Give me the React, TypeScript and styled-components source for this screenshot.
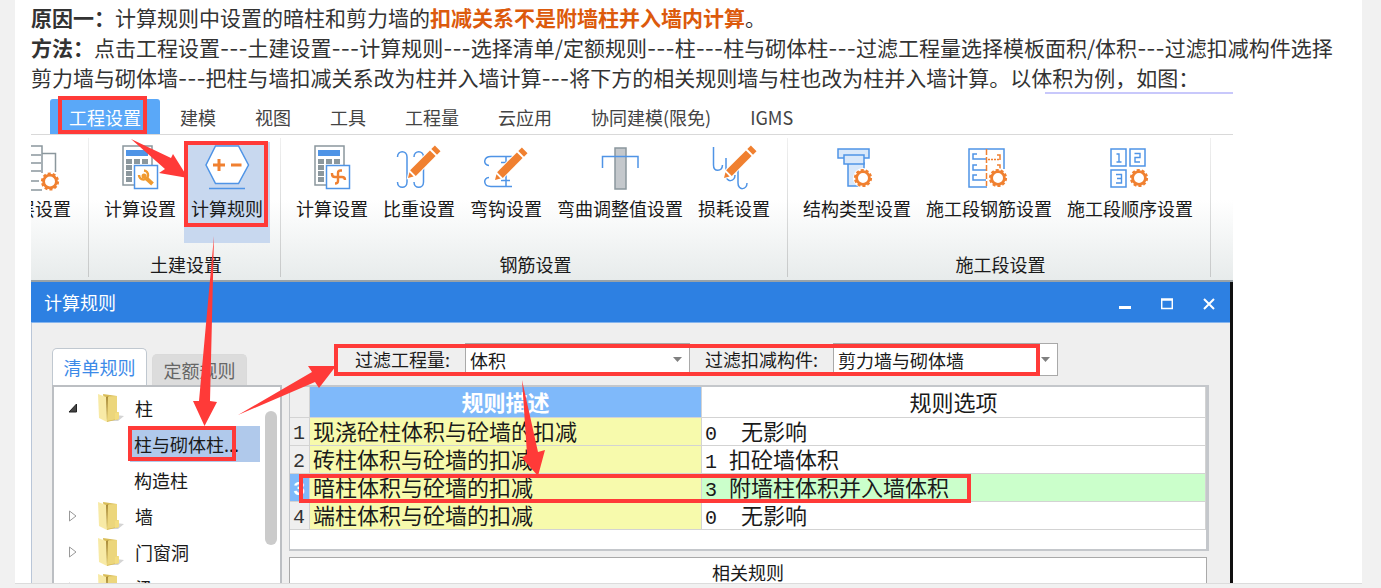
import React from "react";
import styled, { createGlobalStyle, css } from "styled-components";

const BLUE = "#4f94e6";
const ORANGE = "#f08030";
const GREY = "#8b979d";
const RED = "#ff3a38";

const GlobalStyle = createGlobalStyle`
  *, *::before, *::after { box-sizing: border-box; }
  body {
    margin: 0;
    background: #f1f1f1;
    color: #333;
    font-family: "Noto Sans CJK SC", sans-serif;
    font-size: 18px;
  }
  button, select {
    margin: 0;
    padding: 0;
    border: 0;
    background: none;
    color: inherit;
    font: inherit;
    cursor: pointer;
  }
`;

/* ---------- article ---------- */

const Page = styled.div`
  display: flex;
  flex-direction: column;
  height: 100vh;
  padding: 0 19px 4px 15px;
  overflow: hidden;
`;

const Card = styled.main`
  flex: 1;
  min-height: 0;
  padding: 2px 16px 0;
  overflow: hidden;
  background: #fff;
  border-bottom: 1px solid #dcdcdc;
`;

const Paragraph = styled.p`
  margin: 0;
  font-size: 21px;
  line-height: 30px;
`;

const Highlight = styled.strong`
  color: #dc5a0c;
`;

const Dashes = styled.span`
  font-family: Inter, sans-serif;
  font-size: 20px;
  line-height: 1;
`;

const Figure = styled.figure`
  position: relative;
  max-width: 1202px;
  margin: 0;
  overflow: hidden;
  color: #1a1a1a;
`;

/* ---------- ribbon ---------- */

const MainTabs = styled.nav`
  display: flex;
  gap: 1px;
  height: 43px;
  padding: 7px 0 0 19px;
  border-bottom: 1px solid #d9d9d9;
  background: linear-gradient(#c8c8fb, #c8c8fb) right top / 188px 2px no-repeat;
`;

const MainTab = styled.button<{ $active?: boolean }>`
  height: 35px;
  padding: 0 19px;
  border-radius: 3px 3px 0 0;
  color: #444;
  white-space: nowrap;
  ${(p) => p.$active && css`
    background: #5aa8f8;
    color: #fff;
  `}
`;

const Ribbon = styled.section`
  display: flex;
  height: 147px;
  padding: 3px 0;
  background: linear-gradient(#fff 45%, #e7ebeb);
  border-bottom: 2px solid #98a2a8;
`;

const RibbonGroup = styled.div<{ $cut?: boolean }>`
  display: flex;
  flex-direction: column;
  flex-shrink: 0;
  padding: 4px 10px 0 8px;
  border-right: 1px solid;
  border-image: linear-gradient(#f0f0f0, #c6c8c8) 1;
  ${(p) => p.$cut && css`
    width: 58px;
    align-items: flex-end;
    overflow: hidden;
  `}
`;

const ToolRow = styled.div`
  display: flex;
  gap: 1px;
`;

const ToolButton = styled.button<{ $active?: boolean }>`
  display: flex;
  flex-direction: column;
  align-items: center;
  gap: 5px;
  height: 101px;
  padding: 3px 7px 0;
  line-height: 24px;
  white-space: nowrap;
  background: ${(p) => (p.$active ? "#c8d8ef" : "transparent")};
`;

const GroupName = styled.div`
  margin-top: 9px;
  padding-left: 5px;
  line-height: 24px;
  text-align: center;
`;

/* ---------- dialog ---------- */

const Desktop = styled.div`
  padding-right: 3px;
  background: #101010;
`;

const Dialog = styled.section`
  height: 301px;
  border-left: 1px solid #b9c6d8;
  background: #efefef;
`;

const TitleBar = styled.header`
  display: flex;
  align-items: center;
  justify-content: space-between;
  height: 41px;
  margin-left: -1px;
  padding-left: 13px;
  border-bottom: 1px solid #86b5ee;
  background: #2d80e2;
  color: #fff;
`;

const DialogTitle = styled.h2`
  margin: 0;
  font-size: 18px;
  font-weight: 400;
`;

const WindowButton = styled.button`
  width: 42px;
  height: 38px;
`;

const DialogBody = styled.div`
  display: flex;
  gap: 7px;
  padding: 20px 21px 0 20px;
`;

const Sidebar = styled.aside`
  flex: 0 0 230px;
`;

const SideTabs = styled.div`
  display: flex;
  align-items: flex-end;
  gap: 5px;
  height: 42px;
`;

const SideTab = styled.button<{ $active?: boolean }>`
  width: 95px;
  height: ${(p) => (p.$active ? 37 : 31)}px;
  border: 1px solid ${(p) => (p.$active ? "#c0c8d0" : "#dadada")};
  border-bottom: 0;
  border-radius: 5px 5px 0 0;
  background: ${(p) => (p.$active ? "#fff" : "#dcdcdc")};
  color: ${(p) => (p.$active ? "#3c8ae8" : "#666")};
`;

const TreePanel = styled.div`
  display: flex;
  justify-content: space-between;
  height: 240px;
  padding: 3px 3px 0 0;
  overflow: hidden;
  border: 2px solid #bcbfc3;
  background: #fff;
`;

const Tree = styled.ul`
  flex: 1;
  margin: 0;
  padding: 0;
  list-style: none;
`;

const TreeRow = styled.li`
  display: flex;
  align-items: center;
  height: 36px;
  padding-left: 14px;
`;

const Folder = styled.button`
  display: flex;
  align-items: center;
  line-height: 36px;

  svg:first-child { margin-right: 20px; }
  svg:last-of-type { margin-right: 11px; }
`;

const Leaf = styled.button<{ $active?: boolean }>`
  width: 130px;
  height: 36px;
  margin-left: 62px;
  padding-left: 4px;
  text-align: left;
  white-space: nowrap;
  background: ${(p) => (p.$active ? "#b0c9eb" : "transparent")};
`;

const ScrollThumb = styled.div`
  width: 12px;
  height: 134px;
  margin-top: 21px;
  border-radius: 6px;
  background: #cbcbcb;
`;

const Content = styled.div`
  flex: 1;
  min-width: 0;
`;

const Filters = styled.div`
  display: flex;
  align-items: flex-start;
  height: 42px;
  padding-left: 66px;
  line-height: 32px;
`;

const FilterLabel = styled.label`
  margin-right: 15px;
  white-space: nowrap;
`;

const SelectBox = styled.div`
  position: relative;
  width: 225px;
  height: 33px;
  margin-right: 15px;

  svg {
    position: absolute;
    top: 14px;
    right: 8px;
    pointer-events: none;
  }
`;

const Select = styled.select`
  width: 100%;
  height: 33px;
  padding: 0 0 4px 4px;
  border: 1px solid #a9a9a9;
  appearance: none;
  background: #fff;
`;

const TableFrame = styled.div`
  height: 166px;
  border: 2px solid #c4c7cb;
  border-width: 2px 3px 2px 1px;
  background: #fff;
`;

const RuleTable = styled.table`
  width: 100%;
  border-collapse: separate;
  border-spacing: 0;
  table-layout: fixed;
  font-size: 22px;
  line-height: 22px;

  th, td {
    height: 28px;
    padding: 0 0 4px 3px;
    border: 1px solid #d3d3d3;
    border-width: 0 1px 1px 0;
    text-align: left;
    vertical-align: middle;
    white-space: pre;
  }
  thead th {
    height: 31px;
    padding: 0 0 3px;
    text-align: center;
  }
  tbody th {
    padding: 4px 0 0 3px;
  }
`;

const NumberHead = styled.th<{ $active?: boolean }>`
  width: 20px;
  overflow: hidden;
  font-family: "Liberation Mono", monospace;
  font-size: 20px;
  font-weight: ${(p) => (p.$active ? 700 : 400)};
  color: ${(p) => (p.$active ? "#fff" : "#333")};
  background: ${(p) => (p.$active ? "#7fb9fa" : "#efefef")};
`;

const DescriptionHead = styled.th`
  width: 392px;
  background: #7fb9fa;
  color: #fff;
  font-weight: 700;
`;

const OptionHead = styled.th`
  font-weight: 400;
`;

const Description = styled.td`
  background: #f7faac;
`;

const Option = styled.td<{ $active?: boolean }>`
  background: ${(p) => (p.$active ? "#cbffcb" : "#fff")};
`;

const Code = styled.span`
  font-family: "Liberation Mono", monospace;
  font-size: 20px;
  line-height: 0;
`;

const RelatedPanel = styled.div`
  height: 60px;
  margin: 6px 2px 0 0;
  border: 1px solid #a9a9a9;
  background: #fff;
  line-height: 28px;
  text-align: center;
`;

const Annotations = styled.svg`
  position: absolute;
  top: 0;
  left: 0;
  pointer-events: none;
`;

/* ---------- icons ---------- */

const ToolIcon = ({ children }: { children: React.ReactNode }) => (
  <svg width="46" height="46" viewBox="0 0 46 46" fill="none" stroke={BLUE} strokeWidth="1.5" overflow="visible" aria-hidden="true">
    {children}
  </svg>
);

const Gear = ({ x, y }: { x: number; y: number }) => (
  <g fill="none">
    <circle cx={x} cy={y} r="10" fill="#fff" stroke="none" />
    <circle cx={x} cy={y} r="6.4" stroke={ORANGE} strokeWidth="2.8" />
    <circle cx={x} cy={y} r="8" stroke={ORANGE} strokeWidth="2.2" strokeDasharray="3 2.026" />
  </g>
);

const Pencil = ({ x, y }: { x: number; y: number }) => (
  <g transform={`translate(${x} ${y}) rotate(-45)`} fill={ORANGE} stroke="none">
    <path d="M-2 0 L6 -5 H43 V5 H6 Z" fill="#fff" />
    <path d="M0 0 L5 -3 V3 Z" />
    <path d="M7 -4 H35 V4 H7 Z" />
    <path d="M37 -4 H42 V4 H37 Z" />
  </g>
);

const Calculator = () => (
  <>
    <rect x="6" y="1" width="29" height="39" fill="#fff" stroke={GREY} />
    <rect x="9" y="5" width="22" height="6" fill={BLUE} stroke="none" />
    <path d="M9 16.500h6m2 0h6m2 0h6M9 22.500h6M9 28.500h6M9 34.500h6" stroke={GREY} strokeWidth="5" />
    <rect x="17.500" y="20.500" width="23" height="23" fill="#fff" />
  </>
);

const FloorIcon = () => (
  <ToolIcon>
    <path d="M2 1H21V28M2 10H20M2 18H20M2 26H20M2 36H18M2 45H21M21 8.500H34.500V27" stroke={GREY} />
    <Gear x={29} y={36.5} />
  </ToolIcon>
);

const WrenchCalcIcon = () => (
  <ToolIcon>
    <Calculator />
    <path d="M29 33 L35.500 39" stroke="#f09a30" strokeWidth="4" />
    <path d="M27 25.500A4.500 4.500 0 1 1 22 30" stroke="#f09a30" strokeWidth="2.500" />
    <circle cx="27" cy="31" r="2.500" fill="#f09a30" stroke="none" />
  </ToolIcon>
);

const RulesIcon = () => (
  <ToolIcon>
    <path d="M11.500 1H34.500L44.500 20L34.500 38.500H11.500L2 20Z" fill="#fff" />
    <path d="M5 43.500H41" />
    <path d="M9 20H21M15 14V26M27 20H37.500" stroke={ORANGE} strokeWidth="3" />
  </ToolIcon>
);

const RebarCalcIcon = () => (
  <ToolIcon>
    <Calculator />
    <path d="M23 28V29Q23 32 26 32H33Q36 32 36 35M33 25.500H31.500Q29 25.500 29 28V36Q29 38.500 26 38.500" stroke={ORANGE} strokeWidth="2.400" />
  </ToolIcon>
);

const WeightIcon = () => (
  <ToolIcon>
    <path d="M1.500 12C1.500 5 11 5 11 12V37C11 44 1.500 44 1.500 37M18 12C18 5 27.500 5 27.500 12V37C27.500 44 18 44 18 37" />
    <Pencil x={12} y={33} />
  </ToolIcon>
);

const HookIcon = () => (
  <ToolIcon>
    <path d="M29 11.500H8C0 11.500 0 20.500 6 20.500M29 41.500H8C0 41.500 0 32.500 6 32.500M23 11.500V41.500M18 17.500H27M18 35.500H27" />
    <Pencil x={12} y={35} />
  </ToolIcon>
);

const BendIcon = () => (
  <ToolIcon>
    <rect x="18" y="3" width="11" height="41" fill="#c4c8cc" stroke={GREY} />
    <path d="M5.500 23V11.500H41V23" />
  </ToolIcon>
);

const LossIcon = () => (
  <ToolIcon>
    <path d="M2.500 2V20C2.500 27 11 27 11.500 20M15 13V30C15 38 24 37 24 30M27 24V38C27 46 36 45 36 38" />
    <Pencil x={13} y={33} />
  </ToolIcon>
);

const StructureIcon = () => (
  <ToolIcon>
    <g fill="#d9e8fa">
      <path d="M14 18H30V41H14Z" />
      <path d="M4 4H35V13H4Z" />
      <path d="M10 10H30V19H10Z" />
    </g>
    <Gear x={29} y={33} />
  </ToolIcon>
);

const SectionRebarIcon = () => (
  <ToolIcon>
    <path d="M21 42H3V4H38V24M11 9H7V14H20M11 20H7V25H20M11 30H7V35H20" />
    <path d="M20.500 4V41" stroke={ORANGE} strokeDasharray="6 2" />
    <path d="M22 14.500H34" stroke={ORANGE} strokeDasharray="2 1" />
    <path d="M31 10H34V15M31 20H34V24" stroke={ORANGE} />
    <Gear x={32} y={33} />
  </ToolIcon>
);

const SectionOrderIcon = () => (
  <ToolIcon>
    <path d="M4 4H19V21H4ZM23 4H38V21H23ZM4 25H19V42H4Z" />
    <path d="M9.500 9H12V17M9.500 17H14.500M27.500 8.500H33V12.500H28V17H33M9 29.500H14.500V38H9M10 33.500H14.500" strokeWidth="1.400" />
    <Gear x={32} y={33} />
  </ToolIcon>
);

const ExpandArrow = ({ open }: { open?: boolean }) => (
  <svg width="10" height="12" viewBox="0 0 10 12" aria-hidden="true">
    {open ? (
      <path d="M8.500 2V10H1Z" fill="#444" stroke="#222" />
    ) : (
      <path d="M1.500 1V11L8 6Z" fill="#fff" stroke="#999" />
    )}
  </svg>
);

const FolderIcon = () => (
  <svg width="26" height="30" viewBox="0 0 26 30" aria-hidden="true">
    <path d="M18 22L26 23L20 28L12 28Z" fill="#d4d4d4" />
    <path d="M5 1L19 3V19L21 20V26L9 29Z" fill="#d9bd58" />
    <path d="M8 4L11 3V27L8 28Z" fill="#a98b38" />
    <path d="M10 3.500L19 3V26L9 28Z" fill="#ecd67c" />
    <path d="M0 1L8 4L9 29L1 25Z" fill="#f8eaa6" />
    <path d="M17 20L21 19V26L17 27Z" fill="#f3dd80" />
  </svg>
);

const Caret = () => (
  <svg width="9" height="6" viewBox="0 0 9 6" aria-hidden="true">
    <path d="M0 0H9L4.500 5Z" fill="#808080" />
  </svg>
);

/* ---------- data ---------- */

const MENU = ["工程设置", "建模", "视图", "工具", "工程量", "云应用", "协同建模(限免)", "IGMS"];

const GROUPS = [
  { name: "", cut: true, tools: [{ label: "层设置", icon: <FloorIcon /> }] },
  {
    name: "土建设置",
    tools: [
      { label: "计算设置", icon: <WrenchCalcIcon /> },
      { label: "计算规则", icon: <RulesIcon />, active: true },
    ],
  },
  {
    name: "钢筋设置",
    tools: [
      { label: "计算设置", icon: <RebarCalcIcon /> },
      { label: "比重设置", icon: <WeightIcon /> },
      { label: "弯钩设置", icon: <HookIcon /> },
      { label: "弯曲调整值设置", icon: <BendIcon /> },
      { label: "损耗设置", icon: <LossIcon /> },
    ],
  },
  {
    name: "施工段设置",
    tools: [
      { label: "结构类型设置", icon: <StructureIcon /> },
      { label: "施工段钢筋设置", icon: <SectionRebarIcon /> },
      { label: "施工段顺序设置", icon: <SectionOrderIcon /> },
    ],
  },
] as { name: string; cut?: boolean; tools: { label: string; icon: React.ReactNode; active?: boolean }[] }[];

const RULES = [
  { text: "现浇砼柱体积与砼墙的扣减", code: "0  ", option: "无影响" },
  { text: "砖柱体积与砼墙的扣减", code: "1 ", option: "扣砼墙体积" },
  { text: "暗柱体积与砼墙的扣减", code: "3 ", option: "附墙柱体积并入墙体积", active: true },
  { text: "端柱体积与砼墙的扣减", code: "0  ", option: "无影响" },
];

const D = () => <Dashes>---</Dashes>;

export default function App() {
  return (
    <>
      <GlobalStyle />
      <Page>
        <Card>
          <Paragraph>
            <strong>原因一：</strong>计算规则中设置的暗柱和剪力墙的<Highlight>扣减关系不是附墙柱并入墙内计算</Highlight>。
          </Paragraph>
          <Paragraph>
            <strong>方法：</strong>点击工程设置<D />土建设置<D />计算规则<D />选择清单/定额规则<D />柱<D />柱与砌体柱<D />过滤工程量选择模板面积/体积<D />过滤扣减构件选择剪力墙与砌体墙<D />把柱与墙扣减关系改为柱并入墙计算<D />将下方的相关规则墙与柱也改为柱并入墙计算。以体积为例，如图：
          </Paragraph>

          <Figure>
            <MainTabs>
              {MENU.map((label, i) => (
                <MainTab key={label} $active={i === 0}>{label}</MainTab>
              ))}
            </MainTabs>

            <Ribbon>
              {GROUPS.map((group) => (
                <RibbonGroup key={group.name} $cut={group.cut}>
                  <ToolRow>
                    {group.tools.map((tool) => (
                      <ToolButton key={tool.label} $active={tool.active}>
                        {tool.icon}
                        {tool.label}
                      </ToolButton>
                    ))}
                  </ToolRow>
                  <GroupName>{group.name}</GroupName>
                </RibbonGroup>
              ))}
            </Ribbon>

            <Desktop>
              <Dialog>
                <TitleBar>
                  <DialogTitle>计算规则</DialogTitle>
                  <div>
                    <WindowButton aria-label="最小化">
                      <svg width="12" height="12" viewBox="0 0 12 12"><path d="M0 9.500H12" stroke="#fff" strokeWidth="3" /></svg>
                    </WindowButton>
                    <WindowButton aria-label="最大化">
                      <svg width="12" height="12" viewBox="0 0 12 12"><path d="M.7 1H11.300V10.500H.7ZM0 2H12" fill="none" stroke="#fff" strokeWidth="1.500" /></svg>
                    </WindowButton>
                    <WindowButton aria-label="关闭">
                      <svg width="12" height="12" viewBox="0 0 12 12"><path d="M1 1L11 11M11 1L1 11" stroke="#fff" strokeWidth="2" /></svg>
                    </WindowButton>
                  </div>
                </TitleBar>

                <DialogBody>
                  <Sidebar>
                    <SideTabs>
                      <SideTab $active>清单规则</SideTab>
                      <SideTab>定额规则</SideTab>
                    </SideTabs>
                    <TreePanel>
                      <Tree>
                        <TreeRow><Folder><ExpandArrow open /><FolderIcon />柱</Folder></TreeRow>
                        <TreeRow><Leaf $active>柱与砌体柱...</Leaf></TreeRow>
                        <TreeRow><Leaf>构造柱</Leaf></TreeRow>
                        <TreeRow><Folder><ExpandArrow /><FolderIcon />墙</Folder></TreeRow>
                        <TreeRow><Folder><ExpandArrow /><FolderIcon />门窗洞</Folder></TreeRow>
                        <TreeRow><Folder><ExpandArrow /><FolderIcon />梁</Folder></TreeRow>
                      </Tree>
                      <ScrollThumb />
                    </TreePanel>
                  </Sidebar>

                  <Content>
                    <Filters>
                      <FilterLabel htmlFor="quantity">过滤工程量:</FilterLabel>
                      <SelectBox>
                        <Select id="quantity"><option>体积</option></Select>
                        <Caret />
                      </SelectBox>
                      <FilterLabel htmlFor="component">过滤扣减构件:</FilterLabel>
                      <SelectBox>
                        <Select id="component"><option>剪力墙与砌体墙</option></Select>
                        <Caret />
                      </SelectBox>
                    </Filters>

                    <TableFrame>
                      <RuleTable>
                        <thead>
                          <tr>
                            <NumberHead />
                            <DescriptionHead scope="col">规则描述</DescriptionHead>
                            <OptionHead scope="col">规则选项</OptionHead>
                          </tr>
                        </thead>
                        <tbody>
                          {RULES.map((rule, i) => (
                            <tr key={rule.text}>
                              <NumberHead scope="row" $active={rule.active}>{i + 1}</NumberHead>
                              <Description>{rule.text}</Description>
                              <Option $active={rule.active}><Code>{rule.code}</Code>{rule.option}</Option>
                            </tr>
                          ))}
                        </tbody>
                      </RuleTable>
                    </TableFrame>
                    <RelatedPanel>相关规则</RelatedPanel>
                  </Content>
                </DialogBody>
              </Dialog>
            </Desktop>

            <Annotations width="1202" height="491" viewBox="31 92 1202 491" aria-hidden="true">
              <g fill="none" stroke={RED} strokeWidth="4">
                <rect x="60" y="98" width="85" height="34" />
                <rect x="186" y="143" width="80" height="82" />
                <rect x="336" y="346" width="702" height="28" />
                <rect x="130" y="428" width="104" height="31" />
                <rect x="301" y="476" width="668" height="25" />
              </g>
              <g fill={RED}>
                <path d="M131 139L171 158L173 154L188 178L159 173L165 169Z" />
                <path d="M214 236L210 401L217 402L204.500 426L193 401L199 401Z" />
                <path d="M238 415L312 372L308 366L336 366L319 388L315 382Z" />
                <path d="M522 380L538 452L545 450L538 476L522 458L527 454Z" />
              </g>
            </Annotations>
          </Figure>
        </Card>
      </Page>
    </>
  );
}
